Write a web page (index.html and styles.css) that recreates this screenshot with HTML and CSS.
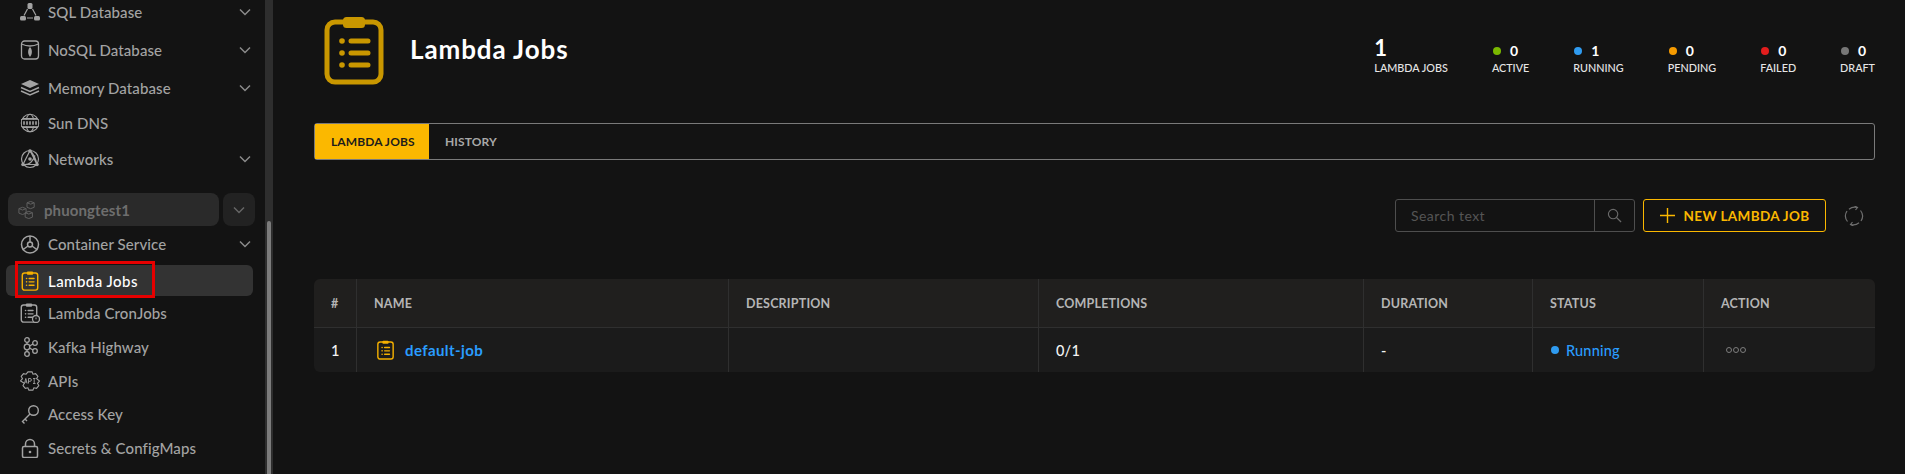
FILE: index.html
```html
<!DOCTYPE html>
<html lang="en">
<head>
<meta charset="utf-8">
<title>Lambda Jobs</title>
<link rel="stylesheet" href="styles.css">
</head>
<body>
<svg class="defs" width="0" height="0" aria-hidden="true">
  <symbol id="clip" viewBox="0 0 60 70">
    <rect x="3" y="7" width="54" height="60" rx="8" fill="none" stroke="currentColor" stroke-width="5"/>
    <rect x="19" y="2" width="22" height="11" rx="3.5" fill="currentColor"/>
    <circle cx="18" cy="26" r="2.8" fill="currentColor"/>
    <circle cx="18" cy="38" r="2.8" fill="currentColor"/>
    <circle cx="18" cy="50" r="2.8" fill="currentColor"/>
    <path d="M27 26h17M27 38h17M27 50h17" stroke="currentColor" stroke-width="5" stroke-linecap="round" fill="none"/>
  </symbol>
  <symbol id="chev" viewBox="0 0 12 8">
    <path d="M1 1.500l5 5 5-5" fill="none" stroke="currentColor" stroke-width="1.500"/>
  </symbol>
</svg>
<div class="app">
  <aside class="side">
    <nav class="nav">
      <a class="row h38">
        <svg class="ico" viewBox="0 0 20 20"><g fill="none" stroke="currentColor" stroke-width="1.200"><path d="M7.500 7l-3.500 6.500M12.500 7l3.500 6.500M7 16h6"/></g><g fill="currentColor"><rect x="7.500" y="1" width="5" height="6" rx="1.500"/><rect x="0" y="14" width="6" height="4.500" rx="1.500"/><rect x="14" y="14" width="6" height="4.500" rx="1.500"/></g></svg>
        <span class="label">SQL Database</span>
        <svg class="chev"><use href="#chev"/></svg>
      </a>
      <a class="row h38">
        <svg class="ico" viewBox="0 0 20 20"><g fill="none" stroke="currentColor" stroke-width="1.300"><rect x="1.500" y="1" width="17" height="18" rx="3"/><path d="M1.500 4q8.500 4 17 0"/></g><path d="M10 7c2.500 2.500 2.500 7 0 10c-2.500-3-2.500-7.500 0-10z" fill="currentColor"/></svg>
        <span class="label">NoSQL Database</span>
        <svg class="chev"><use href="#chev"/></svg>
      </a>
      <a class="row h38">
        <svg class="ico" viewBox="0 0 20 20"><path d="M10 2l9 4-9 4-9-4z" fill="currentColor"/><path d="M1 9.500l9 4 9-4M1 13l9 4 9-4" fill="none" stroke="currentColor" stroke-width="1.500"/></svg>
        <span class="label">Memory Database</span>
        <svg class="chev"><use href="#chev"/></svg>
      </a>
      <a class="row h32">
        <svg class="ico" viewBox="0 0 20 20"><g fill="none" stroke="currentColor" stroke-width="1.100"><circle cx="10" cy="10" r="8.700"/><ellipse cx="10" cy="10" rx="4" ry="8.700"/><path d="M2.500 5.500h15M2.500 14.500h15"/></g><rect x="1.500" y="6.500" width="17" height="7" fill="#131313" stroke="currentColor" stroke-width=".8"/><path d="M4 8.300v3.400M7 8.300v3.400M10 8.300v3.400M13 8.300v3.400M16 8.300v3.400" stroke="currentColor" stroke-width="1.600"/></svg>
        <span class="label">Sun DNS</span>
      </a>
      <a class="row h40">
        <svg class="ico" viewBox="0 0 20 20"><g fill="none" stroke="currentColor" stroke-width="1.200"><circle cx="10" cy="10" r="8.500"/><path d="M10 1.500L3 15.500h14zM10 1.500c4 4 6 9 7 14M3 15.500c5 1 9-1 12-9"/></g><g fill="currentColor"><circle cx="10" cy="2" r="1.800"/><circle cx="3" cy="15.500" r="1.800"/><circle cx="17" cy="15.500" r="1.800"/><circle cx="10" cy="10" r="1.800"/></g></svg>
        <span class="label">Networks</span>
        <svg class="chev"><use href="#chev"/></svg>
      </a>
      <div class="project">
        <div class="project-name">
          <svg class="ico-proj" viewBox="0 0 20 20"><g fill="none" stroke="currentColor" stroke-width="1.100"><path d="M10 2l4-1.500L18 2v5l-4 1.500L10 7zM1 8.500L5 7l4 1.500v5L5 15l-4-1.500zM8 13l4-1.500 4 1.500v5l-4 1.500L8 18zM10 2l4 1.500L18 2M1 8.500l4 1.500 4-1.500M8 13l4 1.500 4-1.500"/></g></svg>
          <span>phuongtest1</span>
        </div>
        <div class="project-toggle"><svg class="chev chev-dim"><use href="#chev"/></svg></div>
      </div>
      <a class="row h36">
        <svg class="ico" viewBox="0 0 20 20"><g fill="none" stroke="currentColor" stroke-width="1.500"><circle cx="10" cy="10.500" r="8.500"/><circle cx="10" cy="10.500" r="2.500"/><path d="M10 2v6M8 12l-5.500 4M12 12l5.500 4"/></g></svg>
        <span class="label">Container Service</span>
        <svg class="chev"><use href="#chev"/></svg>
      </a>
      <a class="row row-active">
        <svg class="ico ico-amber"><use href="#clip"/></svg>
        <span class="label label-active">Lambda Jobs</span>
        <span class="mark"></span>
      </a>
      <a class="row h34">
        <svg class="ico" viewBox="0 0 20 20"><use href="#clip" width="18" height="20"/><circle cx="16" cy="16" r="3.500" fill="#131313" stroke="currentColor" stroke-width="1.300"/><path d="M16 14.500v1.800" stroke="currentColor" stroke-width="1"/></svg>
        <span class="label">Lambda CronJobs</span>
      </a>
      <a class="row h34">
        <svg class="ico" viewBox="0 0 20 20"><g fill="none" stroke="currentColor" stroke-width="1.300"><circle cx="7" cy="3" r="2.300"/><circle cx="7" cy="10" r="2.800"/><circle cx="7" cy="17" r="2.300"/><circle cx="15" cy="6" r="2.300"/><circle cx="15" cy="14" r="2.300"/><path d="M7 5.300v2M7 12.800v2M9.500 9l3.500-2M9.500 11l3.500 2"/></g></svg>
        <span class="label">Kafka Highway</span>
      </a>
      <a class="row h34">
        <svg class="ico" viewBox="0 0 20 20"><path d="M8 .9h4l1 2.300 2.600-.6 2.300 2.800-1.300 2.300L19.500 10l-2 2.300 1.300 2.300-2.300 2.800-2.600-.6-1 2.300h-4l-1-2.300-2.600.6-2.300-2.800 1.300-2.300L.5 10l2-2.300L1.200 5.400l2.300-2.800 2.600.6z" fill="none" stroke="currentColor" stroke-width="1.100"/><path d="M4.500 12.500l1.300-5 1.300 5M5 11h1.800M8.500 12.500v-5h1.500a1.300 1.300 0 0 1 0 2.800H8.500M13 7.500h2.500M14.200 7.500v5M13 12.500h2.500" fill="none" stroke="currentColor" stroke-width=".9"/></svg>
        <span class="label">APIs</span>
      </a>
      <a class="row h32">
        <svg class="ico" viewBox="0 0 20 20"><g fill="none" stroke="currentColor" stroke-width="1.400"><circle cx="13.500" cy="6.500" r="4.800"/><path d="M10 10L2 18M2.500 17.500l2 2M5 15l2 2"/></g></svg>
        <span class="label">Access Key</span>
      </a>
      <a class="row h36">
        <svg class="ico" viewBox="0 0 20 20"><g fill="none" stroke="currentColor" stroke-width="1.500"><rect x="2.500" y="8.500" width="15" height="11" rx="1.500"/><path d="M5.500 8.500V6a4.500 4.500 0 0 1 9 0v2.500"/></g><circle cx="10" cy="14" r="1.300" fill="currentColor"/></svg>
        <span class="label">Secrets &amp; ConfigMaps</span>
      </a>
    </nav>
  </aside>
  <div class="track"><div class="thumb"></div></div>
  <main class="main">
    <header class="head">
      <svg class="head-icon"><use href="#clip"/></svg>
      <h1 class="title">Lambda Jobs</h1>
      <div class="stats">
        <div class="stat"><div class="stat-big">1</div><div class="stat-label">LAMBDA JOBS</div></div>
        <div class="stat"><div class="stat-val"><i class="dot green"></i><b>0</b></div><div class="stat-label">ACTIVE</div></div>
        <div class="stat"><div class="stat-val"><i class="dot blue"></i><b>1</b></div><div class="stat-label">RUNNING</div></div>
        <div class="stat"><div class="stat-val"><i class="dot orange"></i><b>0</b></div><div class="stat-label">PENDING</div></div>
        <div class="stat"><div class="stat-val"><i class="dot red"></i><b>0</b></div><div class="stat-label">FAILED</div></div>
        <div class="stat"><div class="stat-val"><i class="dot gray"></i><b>0</b></div><div class="stat-label">DRAFT</div></div>
      </div>
    </header>
    <div class="tabs">
      <span class="tab tab-on">LAMBDA JOBS</span>
      <span class="tab">HISTORY</span>
    </div>
    <div class="tools">
      <div class="search">
        <span class="search-text">Search text</span>
        <span class="search-btn"><svg class="search-ico" viewBox="0 0 16 16"><circle cx="6.500" cy="6.500" r="5" fill="none" stroke="currentColor" stroke-width="1.200"/><path d="M10 10l5 5" stroke="currentColor" stroke-width="1.400"/></svg></span>
      </div>
      <button class="new"><svg class="plus" viewBox="0 0 15 15"><path d="M7.500 0v15M0 7.500h15" stroke="currentColor" stroke-width="1.400"/></svg>NEW LAMBDA JOB</button>
      <svg class="refresh" viewBox="0 0 20 20"><g fill="none" stroke="#6f6f6f" stroke-width="1.200"><path d="M5 3.200A9 9 0 0 1 13 1.500M15 16.800A9 9 0 0 1 7 18.500M3.500 15.500A9 9 0 0 1 3 5M16.500 4.500A9 9 0 0 1 17 15"/><path d="M10.500 0l3 1.500-2 2.500M9.500 20l-3-1.500 2-2.500"/></g></svg>
    </div>
    <table class="table">
      <colgroup>
        <col class="c1"><col class="c2"><col class="c3"><col class="c4"><col class="c5"><col class="c6"><col class="c7">
      </colgroup>
      <thead>
        <tr><th>#</th><th>NAME</th><th>DESCRIPTION</th><th>COMPLETIONS</th><th>DURATION</th><th>STATUS</th><th>ACTION</th></tr>
      </thead>
      <tbody>
        <tr>
          <td class="num">1</td>
          <td><span class="name"><svg class="job-ico"><use href="#clip"/></svg><a class="job">default-job</a></span></td>
          <td></td>
          <td>0/1</td>
          <td>-</td>
          <td><span class="running"><i class="dot blue small"></i>Running</span></td>
          <td><span class="more"><i></i><i></i><i></i></span></td>
        </tr>
      </tbody>
    </table>
  </main>
</div>
</body>
</html>
```

FILE: styles.css
```css
* { box-sizing: border-box; }
html, body { margin: 0; height: 100%; overflow: hidden; }
body { background: #131313; color: #fff; font-family: "Lato", "Noto Sans", sans-serif; }
.defs { position: absolute; }
.app { display: flex; height: 474px; }

.side { width: 265px; flex: none; background: #131313; overflow: hidden; }
.nav { display: flex; flex-direction: column; margin-top: -7px; }
.row { display: flex; align-items: center; padding-left: 20px; padding-right: 14px; color: #a3a3a3; font-size: 15px; font-weight: 500; letter-spacing: .1px; position: relative; }
.h32 { height: 32px; }
.h34 { height: 34px; }
.h36 { height: 36px; }
.h38 { height: 38px; }
.h40 { height: 40px; }
.ico { width: 20px; height: 20px; flex: none; color: #a3a3a3; }
.label { margin-left: 8px; flex: 1; }
.label-active { letter-spacing: .45px; }
.chev { width: 12px; height: 8px; flex: none; color: #8a8a8a; }
.chev-dim { color: #666; }

.project { display: flex; gap: 4px; margin: 14px 10px 0 8px; height: 33px; }
.project-name { flex: 1; display: flex; align-items: center; padding-left: 10px; background: #2a2a2a; border-radius: 8px; color: #6e6e6e; font-size: 15px; font-weight: 700; letter-spacing: .1px; }
.project-name span { margin-left: 8px; }
.ico-proj { width: 18px; height: 18px; color: #5f5f5f; }
.project-toggle { width: 32px; display: flex; align-items: center; justify-content: center; background: #222; border-radius: 8px; }

.row-active { height: 31px; margin: 3px 12px 0 6px; padding-left: 14px; background: #333; border-radius: 6px; color: #fff; }
.ico-amber { color: #f5b000; }
.mark { position: absolute; left: 9px; top: -4px; width: 140px; height: 37px; border: 3px solid #e60000; }

.track { width: 8px; flex: none; background: #2e2e2e; padding: 221px 2px 0; }
.thumb { height: 100%; background: #7c7c7c; border-radius: 2px 2px 0 0; }

.main { flex: 1; padding: 0 30px 0 41px; min-width: 0; }
.head { display: flex; height: 123px; align-items: flex-start; }
.head-icon { width: 60px; height: 70px; margin: 15px 0 0 10px; color: #c99700; flex: none; }
.title { margin: 32px 0 0 26px; font-size: 26px; line-height: 34px; font-weight: 700; letter-spacing: .9px; }
.stats { margin-left: auto; display: flex; gap: 44px; padding-top: 35px; }
.stat { display: flex; flex-direction: column; }
.stat-big { font-size: 22px; line-height: 26px; font-weight: 700; }
.stat-val { height: 26px; display: flex; align-items: flex-end; gap: 9px; padding: 0 0 2px 1px; font-size: 14px; line-height: 16px; }
.stat-val b { font-weight: 700; }
.stat-label { font-size: 10.800px; line-height: 16px; color: #e6e6e6; font-weight: 500; margin-top: -1px; }
.dot { width: 8px; height: 8px; border-radius: 50%; display: inline-block; flex: none; margin-bottom: 4px; }
.green { background: #7ab800; }
.blue { background: #2f9bf0; }
.orange { background: #f59a00; }
.red { background: #e21d1d; }
.gray { background: #777; }

.tabs { display: flex; height: 37px; border: 1px solid #7a7a7a; border-radius: 3px; }
.tab { display: flex; align-items: center; padding: 0 16px; font-size: 12px; font-weight: 700; color: #a8a8a8; letter-spacing: .1px; white-space: nowrap; }
.tab-on { width: 114px; background: #fbb800; color: #1c1c1c; }

.tools { display: flex; align-items: center; justify-content: flex-end; margin-top: 39px; height: 33px; }
.search { width: 240px; height: 33px; display: flex; border: 1px solid #4e4e4e; border-radius: 3px; }
.search-text { flex: 1; padding-left: 15px; line-height: 31px; font-size: 14px; color: #555; letter-spacing: .45px; }
.search-btn { width: 40px; border-left: 1px solid #4e4e4e; display: flex; align-items: center; justify-content: center; color: #6a6a6a; }
.search-ico { width: 15px; height: 15px; }
.new { margin-left: 8px; width: 183px; height: 33px; display: flex; align-items: center; justify-content: center; gap: 9px; background: none; border: 1px solid #fbb800; border-radius: 3px; color: #fbb800; font: 700 13.500px "Lato", "Noto Sans", sans-serif; letter-spacing: .35px; }
.plus { width: 15px; height: 15px; }
.refresh { width: 20px; height: 20px; margin: 0 11px 0 18px; }

.table { width: 100%; margin-top: 47px; border-collapse: separate; border-spacing: 0; table-layout: fixed; border-radius: 6px; overflow: hidden; }
.c1 { width: 43px; }
.c2 { width: 372px; }
.c3 { width: 310px; }
.c4 { width: 325px; }
.c5 { width: 169px; }
.c6 { width: 171px; }
.c7 { width: 171px; }
th { height: 49px; padding: 0 0 0 17px; text-align: left; background: #201f1e; border-right: 1px solid #2f2f2f; border-bottom: 1px solid #2f2f2f; color: #b5b5b5; font-size: 12.500px; font-weight: 700; letter-spacing: .2px; }
th:last-child, td:last-child { border-right: 0; }
td { height: 44px; padding: 0 0 0 17px; background: #1b1b1b; border-right: 1px solid #2f2f2f; font-size: 14.500px; font-weight: 500; color: #f4f4f4; letter-spacing: .2px; }
.name { display: flex; align-items: center; gap: 11px; padding-left: 3px; }
.job-ico { width: 17px; height: 20px; color: #f5b000; flex: none; }
.job { color: #2a9dff; font-size: 15px; font-weight: 700; letter-spacing: .4px; }
.running { display: flex; align-items: center; color: #2a9dff; font-weight: 500; }
.small { margin: 0 7px 0 1px; }
.more { display: flex; gap: 1px; padding-left: 5px; }
.more i { width: 6px; height: 6px; border: 1px solid #7d7d7d; border-radius: 50%; }
```
